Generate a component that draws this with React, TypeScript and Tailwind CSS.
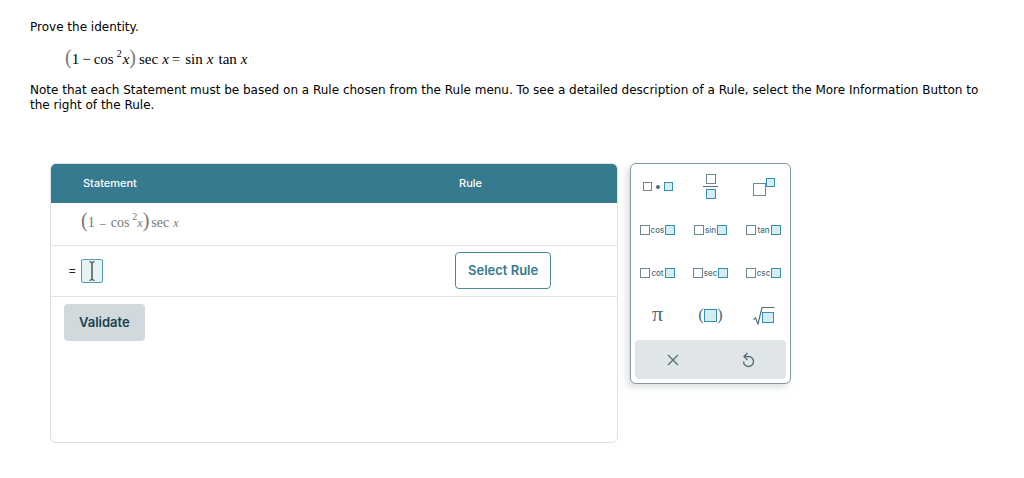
import type { ReactNode } from "react";

type SlotProps = {
  filled?: boolean;
  size?: "sm" | "md" | "lg";
};

const slotSizes = {
  sm: "size-[9px]",
  md: "size-[10px]",
  lg: "size-[13px]",
};

function Slot({ filled = false, size = "md" }: SlotProps) {
  return (
    <span
      className={`block shrink-0 border ${slotSizes[size]} ${
        filled ? "border-[#3590ab] bg-[#d4edf3]" : "border-[#6c858f] bg-white"
      }`}
    />
  );
}

function TrigKey({ name }: { name: string }) {
  return (
    <span className="flex items-center gap-px">
      <Slot />
      <span className="text-[8px] leading-[10px] font-medium">{name}</span>
      <Slot filled />
    </span>
  );
}

type Key = { label: string; face: ReactNode };

const keys: Key[] = [
  {
    label: "Multiply",
    face: (
      <span className="flex items-center gap-1">
        <Slot size="sm" />
        <span className="size-1 rounded-full bg-[#4f6d7a]" />
        <Slot filled size="sm" />
      </span>
    ),
  },
  {
    label: "Fraction",
    face: (
      <span className="flex flex-col items-center gap-[2px]">
        <Slot />
        <span className="h-px w-[15px] bg-[#4f6d7a]" />
        <Slot filled />
      </span>
    ),
  },
  {
    label: "Exponent",
    face: (
      <span className="flex items-start">
        <span className="pt-[5px]">
          <Slot size="lg" />
        </span>
        <Slot filled size="sm" />
      </span>
    ),
  },
  { label: "Cosine", face: <TrigKey name="cos" /> },
  { label: "Sine", face: <TrigKey name="sin" /> },
  { label: "Tangent", face: <TrigKey name="tan" /> },
  { label: "Cotangent", face: <TrigKey name="cot" /> },
  { label: "Secant", face: <TrigKey name="sec" /> },
  { label: "Cosecant", face: <TrigKey name="csc" /> },
  {
    label: "Pi",
    face: <span className="pb-1 font-['Liberation_Serif',serif] text-[22px] leading-5">π</span>,
  },
  {
    label: "Parentheses",
    face: (
      <span className="flex items-center font-['Liberation_Serif',serif] text-[17px] leading-5">
        <span className="pb-0.5">(</span>
        <Slot filled size="lg" />
        <span className="pb-0.5">)</span>
      </span>
    ),
  },
  {
    label: "Square root",
    face: (
      <svg width="22" height="18" viewBox="0 0 22 18" fill="none" aria-hidden="true">
        <path d="M0.500 12.500l2-1.500L5 17L9 0.500H21.500" stroke="#4f6d7a" strokeWidth="1.200" />
        <rect x="9.500" y="5.500" width="11" height="10" fill="#d4edf3" stroke="#3590ab" />
      </svg>
    ),
  },
];

function LeftSide({ small = false }: { small?: boolean }) {
  return (
    <>
      <span className="text-[20px] leading-5 text-[#777]">(</span>
      <span>1</span>
      <span className={small ? "px-[5px] text-[12px]" : "px-[3px]"}>{small ? "–" : "−"}</span>
      <span>cos</span>
      <span className="self-start pt-0.5 pl-[3px] text-[10px] leading-[10px]">2</span>
      <i className={small ? "text-[12px]" : "pl-px"}>x</i>
      <span className="text-[20px] leading-5 text-[#777]">)</span>
      <span className={small ? "pl-0.5" : "pl-[3px]"}>sec</span>
      <i className={small ? "pl-1 text-[12px]" : "pl-1"}>x</i>
    </>
  );
}

function Keypad() {
  return (
    <aside
      aria-label="Math keypad"
      className="w-[161px] shrink-0 rounded-md border border-[#8199a3] bg-white pb-1 shadow-[-3px_3px_6px_rgba(60,90,100,0.2)]"
    >
      <div className="grid grid-cols-3 pt-px pb-[3px]">
        {keys.map((key) => (
          <button
            key={key.label}
            type="button"
            aria-label={key.label}
            className="flex h-[43px] items-center justify-center text-[#4f6d7a]"
          >
            {key.face}
          </button>
        ))}
      </div>
      <div className="mx-1 grid h-[39px] grid-cols-2 rounded bg-[#e0e5e7] text-[#4f6d7a]">
        <button type="button" aria-label="Clear" className="flex items-center justify-center">
          <svg width="12" height="12" viewBox="0 0 12 12" stroke="currentColor" strokeWidth="1.3" aria-hidden="true">
            <path d="M1 1l10 10M11 1L1 11" />
          </svg>
        </button>
        <button type="button" aria-label="Undo" className="flex items-center justify-center">
          <svg width="14" height="16" viewBox="0 0 14 16" fill="none" stroke="currentColor" strokeWidth="1.3" aria-hidden="true">
            <path d="M3 4.500h4.500a5 5 0 1 1-5 5" />
            <path d="M6.500 1L3 4.500L6.500 8" />
          </svg>
        </button>
      </div>
    </aside>
  );
}

export default function App() {
  return (
    <main className="bg-white pt-5 pr-3 pl-[30px] font-['DejaVu_Sans',sans-serif] text-[12px] leading-[15px] text-black">
      <h1>Prove the identity.</h1>

      <p className="mt-3 flex items-baseline pl-[35px] font-['Liberation_Serif',serif] text-[15px] leading-5">
        <LeftSide />
        <span className="px-[3px]">=</span>
        <span className="pl-0.5">sin</span>
        <i className="pl-1">x</i>
        <span className="pl-[5px]">tan</span>
        <i className="pl-1">x</i>
      </p>

      <p className="mt-3.5 pr-5">
        Note that each Statement must be based on a Rule chosen from the Rule menu. To see a detailed
        description of a Rule, select the More Information Button to the right of the Rule.
      </p>

      <div className="mt-[50px] flex items-start gap-3 pl-5 font-['Inter',sans-serif] text-[13px]">
        <section className="min-h-[280px] max-w-[568px] flex-1 overflow-hidden rounded-md border border-[#dbe0e2]">
          <table className="w-full table-fixed text-left">
            <colgroup>
              <col />
              <col className="w-[164px]" />
            </colgroup>
            <thead className="bg-[#357a8f] text-[11px] text-white">
              <tr className="h-[39px]">
                <th className="pl-8 font-medium">Statement</th>
                <th className="pl-1.5 font-medium">Rule</th>
              </tr>
            </thead>
            <tbody>
              <tr className="h-[42px] border-b border-[#dfe4e5]">
                <td className="pb-1 pl-[30px]">
                  <span className="flex items-baseline font-['Liberation_Serif',serif] text-[14px] leading-5 text-[#777]">
                    <LeftSide small />
                  </span>
                </td>
                <td />
              </tr>
              <tr className="h-[51px] border-b border-[#dfe4e5]">
                <td className="pl-[17px]">
                  <label className="flex items-center gap-1">
                    <span className="text-[#222]">=</span>
                    <span className="relative block">
                      <input
                        type="text"
                        aria-label="Next expression"
                        className="block h-6 w-[22px] rounded-xs border border-[#559eb1] bg-[#e5f3f6] outline-none"
                      />
                      <svg
                        className="pointer-events-none absolute top-0.5 left-[7px]"
                        width="8"
                        height="20"
                        viewBox="0 0 8 20"
                        fill="none"
                        stroke="#555"
                        aria-hidden="true"
                      >
                        <path d="M4 1.500v17" strokeWidth="1.500" />
                        <path d="M1.500 0.500L4 1.500L6.500 0.500M1.500 19.500L4 18.500L6.500 19.500" strokeWidth="1.300" />
                      </svg>
                    </span>
                  </label>
                </td>
                <td>
                  <button
                    type="button"
                    className="ml-0.5 h-[37px] rounded border border-[#4d899b] px-3 text-[13px] font-semibold text-[#357a8f]"
                  >
                    Select Rule
                  </button>
                </td>
              </tr>
            </tbody>
          </table>
          <div className="px-[13px] pt-[7px]">
            <button
              type="button"
              className="h-[37px] rounded bg-[#d2d9dc] px-[15px] text-[13px] font-semibold text-[#18414f]"
            >
              Validate
            </button>
          </div>
        </section>

        <Keypad />
      </div>
    </main>
  );
}
